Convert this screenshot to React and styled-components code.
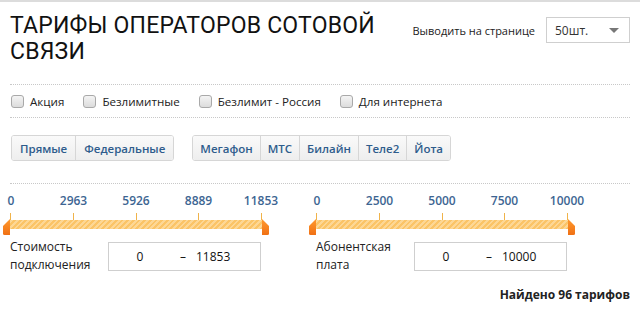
import React from "react";
import styled, { createGlobalStyle } from "styled-components";

const Global = createGlobalStyle`
  html, body {
    margin: 0;
    padding: 0;
    background: #fff;
  }
  body {
    font-family: "Open Sans", "DejaVu Sans", sans-serif;
    color: #222;
  }
`;

const Page = styled.div`
  width: 640px;
  height: 318px;
  overflow: hidden;
  border-top: 2px solid #dcdcdc;
  box-sizing: border-box;
  padding: 0 10px 0 10px;
`;

const Header = styled.div`
  display: flex;
  justify-content: space-between;
  align-items: flex-start;
  padding-top: 11px;
  height: 71px;
`;

const Title = styled.h1`
  margin: 0;
  font-family: Roboto, "Liberation Sans", sans-serif;
  font-weight: 400;
  font-size: 23px;
  line-height: 26px;
  letter-spacing: 0.2px;
  color: #111;
  width: 380px;
`;

const PerPage = styled.div`
  display: flex;
  align-items: center;
  gap: 11px;
  margin-top: 4px;
  font-size: 11px;
`;

const Select = styled.div`
  width: 84px;
  height: 26px;
  box-sizing: border-box;
  border: 1px solid #cfcfcf;
  display: flex;
  align-items: center;
  justify-content: space-between;
  padding: 0 10px 0 8px;
  font-size: 12px;
  color: #333;
`;

const Caret = styled.span`
  width: 0;
  height: 0;
  border-left: 5px solid transparent;
  border-right: 5px solid transparent;
  border-top: 5px solid #777;
`;

const Dotted = styled.div`
  border-top: 1px dotted #c8c8c8;
`;

const Checks = styled.div`
  display: flex;
  align-items: center;
  gap: 19px;
  height: 32px;
  padding-left: 1px;
`;

const CheckItem = styled.label`
  display: flex;
  align-items: center;
  gap: 6px;
  font-size: 11.6px;
  color: #222;
`;

const Box = styled.span`
  width: 13px;
  height: 13px;
  box-sizing: border-box;
  border: 1px solid #a9a9a9;
  border-radius: 3px;
  background: linear-gradient(#f4f4f4, #dcdcdc);
`;

const Filters = styled.div`
  display: flex;
  gap: 18px;
  padding: 17px 0 22px 1px;
`;

const Group = styled.div`
  display: flex;
  border: 1px solid #d6d6d6;
  border-radius: 3px;
  overflow: hidden;
`;

const Btn = styled.div`
  height: 24px;
  display: flex;
  align-items: center;
  padding: 0 ${(p) => (p.$wide ? 8 : 7)}px;
  font-size: 11.5px;
  font-weight: 600;
  color: #2e5c8c;
  background: linear-gradient(#fafafa, #eeeeee);
  & + & {
    border-left: 1px solid #d6d6d6;
  }
`;

const Ranges = styled.div`
  display: flex;
  gap: 54px;
  padding-top: 8px;
`;

const RangeCol = styled.div`
  width: 252px;
`;

const Scale = styled.div`
  display: flex;
  justify-content: space-between;
  height: 16px;
  padding: 0 1px;
`;

const ScaleLabel = styled.span`
  width: 0;
  display: flex;
  justify-content: center;
  white-space: nowrap;
  font-size: 12px;
  font-weight: 600;
  color: #3d6592;
`;

const Ticks = styled.div`
  display: flex;
  justify-content: space-between;
  height: 7px;
  margin-top: 5px;
`;

const Tick = styled.span`
  width: 1px;
  background: #f0b34a;
`;

const Track = styled.div`
  position: relative;
  height: 9px;
  background: repeating-linear-gradient(
    -45deg,
    #fbc467 0px,
    #fbc467 2px,
    #fdd795 2px,
    #fdd795 4px
  );
`;

const Handle = styled.svg`
  position: absolute;
  top: -1px;
  ${(p) => (p.$side === "left" ? "left: -7px;" : "right: -7px;")}
`;

const InputRow = styled.div`
  display: flex;
  align-items: center;
  margin-top: 9px;
`;

const InputLabel = styled.div`
  width: 98px;
  font-size: 12px;
  line-height: 18px;
  color: #222;
`;

const RangeInput = styled.div`
  width: 153px;
  height: 29px;
  box-sizing: border-box;
  border: 1px solid #cfcfcf;
  display: flex;
  align-items: center;
  font-size: 12px;
  color: #111;
`;

const From = styled.span`
  width: 62px;
  text-align: center;
`;

const Dash = styled.span`
  width: 16px;
  padding-left: 9px;
`;

const Found = styled.div`
  text-align: right;
  font-size: 12px;
  font-weight: 700;
  color: #222;
  margin-top: 12px;
`;

const HandleIcon = ({ side }) => (
  <Handle $side={side} width="8" height="16" viewBox="0 0 8 16">
    <defs>
      <linearGradient id={"hg" + side} x1="0" y1="0" x2="0" y2="1">
        <stop offset="0" stopColor="#ff9a2e" />
        <stop offset="1" stopColor="#f07014" />
      </linearGradient>
    </defs>
    {side === "left" ? (
      <path d="M7 0 L7 16 L1.5 16 Q0 16 0 14.5 L0 7 Z" fill={"url(#hg" + side + ")"} />
    ) : (
      <path d="M1 0 L1 16 L6.5 16 Q8 16 8 14.5 L8 7 Z" fill={"url(#hg" + side + ")"} />
    )}
  </Handle>
);

const Range = ({ labels, title, from, to }) => (
  <RangeCol>
    <Scale>
      {labels.map((l) => (
        <ScaleLabel key={l}>{l}</ScaleLabel>
      ))}
    </Scale>
    <Ticks>
      {labels.map((l) => (
        <Tick key={l} />
      ))}
    </Ticks>
    <Track>
      <HandleIcon side="left" />
      <HandleIcon side="right" />
    </Track>
    <InputRow>
      <InputLabel>{title}</InputLabel>
      <RangeInput>
        <From>{from}</From>
        <Dash>–</Dash>
        <span>{to}</span>
      </RangeInput>
    </InputRow>
  </RangeCol>
);

export default function App() {
  return (
    <>
      <Global />
      <Page>
        <Header>
          <Title>ТАРИФЫ ОПЕРАТОРОВ СОТОВОЙ СВЯЗИ</Title>
          <PerPage>
            Выводить на странице
            <Select>
              50шт.
              <Caret />
            </Select>
          </PerPage>
        </Header>
        <Dotted />
        <Checks>
          <CheckItem><Box />Акция</CheckItem>
          <CheckItem><Box />Безлимитные</CheckItem>
          <CheckItem><Box />Безлимит - Россия</CheckItem>
          <CheckItem><Box />Для интернета</CheckItem>
        </Checks>
        <Dotted />
        <Filters>
          <Group>
            <Btn $wide>Прямые</Btn>
            <Btn $wide>Федеральные</Btn>
          </Group>
          <Group>
            <Btn>Мегафон</Btn>
            <Btn>МТС</Btn>
            <Btn>Билайн</Btn>
            <Btn>Теле2</Btn>
            <Btn>Йота</Btn>
          </Group>
        </Filters>
        <Dotted />
        <Ranges>
          <Range
            labels={["0", "2963", "5926", "8889", "11853"]}
            title={<>Стоимость<br />подключения</>}
            from="0"
            to="11853"
          />
          <Range
            labels={["0", "2500", "5000", "7500", "10000"]}
            title={<>Абонентская<br />плата</>}
            from="0"
            to="10000"
          />
        </Ranges>
        <Found>Найдено 96 тарифов</Found>
      </Page>
    </>
  );
}
